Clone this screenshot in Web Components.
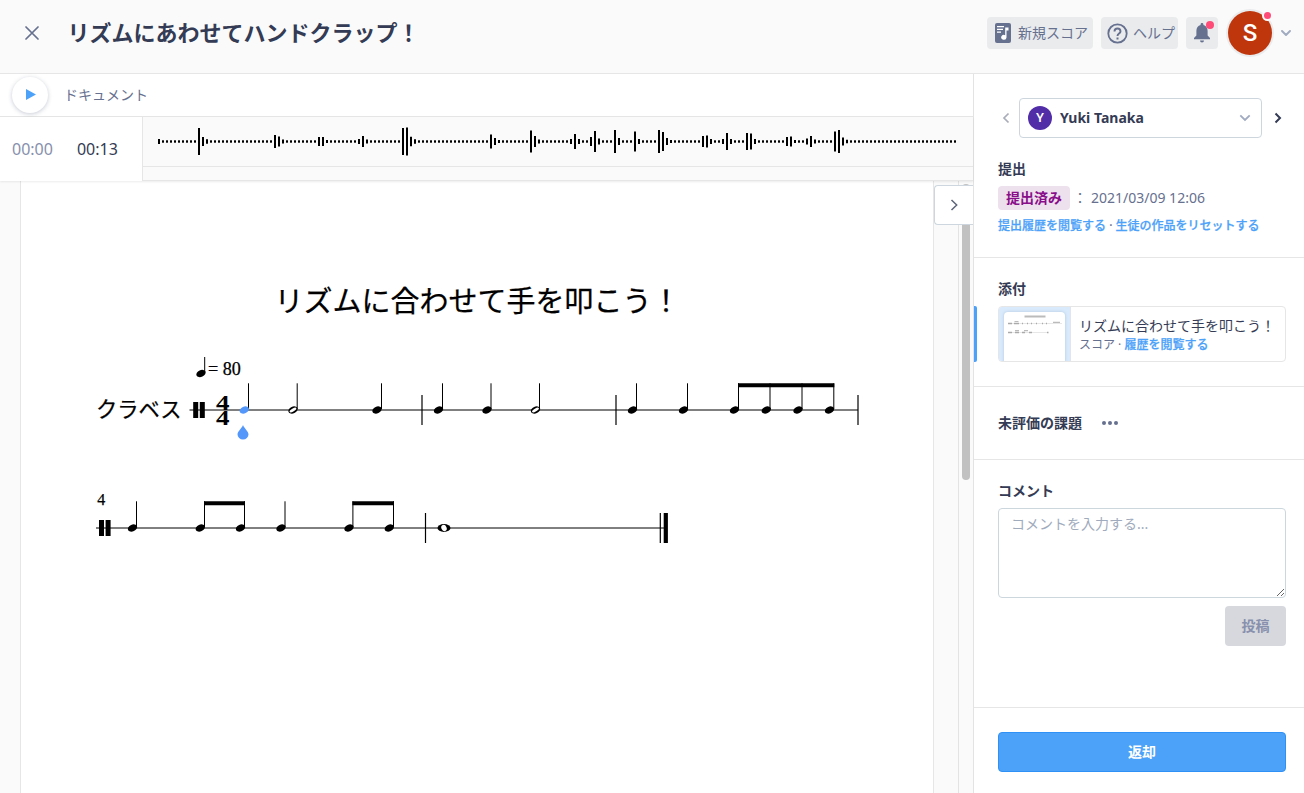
<!DOCTYPE html>
<html lang="ja">
<head>
<meta charset="utf-8">
<title>リズムにあわせてハンドクラップ！</title>
<style>
html,body{margin:0;height:100%;overflow:hidden}
body{font-family:"Noto Sans","Noto Sans CJK JP",sans-serif;font-size:14px;color:#343b54;background:#fafafa}
</style>
</head>
<body>
<assignment-app></assignment-app>
<script>
function define(name, html, setup) {
  const tpl = document.createElement('template');
  tpl.innerHTML = '<style>*{box-sizing:border-box}svg{display:block;flex:none}</style>' + html;
  customElements.define(name, class extends HTMLElement {
    constructor() {
      super();
      this.attachShadow({mode: 'open'}).appendChild(tpl.content.cloneNode(true));
      if (setup) setup(this.shadowRoot, this);
    }
  });
}

define('tool-button', `
<style>
:host{display:block;height:32px;flex:none}
button{display:flex;align-items:center;gap:5px;width:100%;height:32px;padding:0 0 0 7px;border:0;border-radius:4px;background:#e9ebed;color:#66708f;font:400 14px/30px "Noto Sans CJK JP",sans-serif;white-space:nowrap}
.label{display:block;height:32px}
</style>
<button><slot name="icon"></slot><span class="label"><slot></slot></span></button>`);

define('user-avatar', `
<style>
:host{display:flex;position:relative;width:44px;height:44px;border-radius:50%;background:#bf360c;box-shadow:0 0 0 2px #e9ebed;color:#fff;align-items:center;justify-content:center;font:500 24px/44px Roboto,sans-serif;flex:none}
i{position:absolute;right:1px;top:1px;width:7px;height:7px;border-radius:50%;background:#ff4b77;box-shadow:0 0 0 2px #fafafa}
</style><slot></slot><i></i>`);

define('app-header', `
<style>
:host{display:flex;align-items:flex-start;height:74px;padding:11px 13px 0 25px;border-bottom:1px solid #e6e6e6;background:#fafafa;flex:none}
.close{margin-top:15px}
h1{margin:2px auto 0 28.5px;font:700 22px/36px "Noto Sans CJK JP",sans-serif;color:#343b54}
tool-button{margin:6px 8px 0 0}
.new{width:106px}.help{width:77px}
.bell{position:relative;width:32px;margin-right:10px}
.down{margin:19px 0 0 9px}
</style>
<svg class="close" width="14" height="14" viewBox="0 0 14 14" fill="none" stroke="#66708f" stroke-width="1.7" stroke-linecap="round"><path d="M1 1l12 12M13 1L1 13"/></svg>
<h1>リズムにあわせてハンドクラップ！</h1>
<tool-button class="new"><svg slot="icon" width="19" height="20" viewBox="0 0 19 20"><rect x="1" width="16" height="20" rx="2" fill="#66708f"/><path d="M3 3.7h7M3 6.4h6M3 9.1h4" stroke="#fff" stroke-width="1.2"/><path d="M11.200 4.500h3.300v3h-2v7a2.700 2.400 0 1 1-1.300-2.200z" fill="#fff"/></svg>新規スコア</tool-button>
<tool-button class="help"><svg slot="icon" style="margin-left:-1px" width="21" height="21" viewBox="0 0 21 21" fill="none" stroke="#66708f" stroke-width="1.8"><circle cx="10.5" cy="10.5" r="9.2"/><path d="M7.500 8.500c0-4 6-4 6 0 0 2-3 2.200-3 4.400" stroke-width="1.9"/><path d="M10.500 14.500v2" stroke-width="2"/></svg>ヘルプ</tool-button>
<tool-button class="bell"><svg slot="icon" style="overflow:visible" width="18" height="22" viewBox="0 0 18 22"><path d="M9 1c.9 0 1.400.6 1.400 1.400v.7c2.600.6 4.200 2.800 4.200 5.600v4.900l2.400 2.500v1.100H1v-1.100l2.400-2.500V8.700c0-2.800 1.600-5 4.200-5.600v-.7C7.600 1.600 8.100 1 9 1zM7 18.500h4a2 2 0 0 1-4 0z" fill="#66708f"/><circle cx="17" cy="3" r="4" fill="#ff4b77"/></svg></tool-button>
<user-avatar>S</user-avatar>
<svg class="down" width="10" height="7" viewBox="0 0 10 7" fill="none" stroke="#a0abc0" stroke-width="1.900" stroke-linecap="round" stroke-linejoin="round"><path d="M1 1l4 4 4-4"/></svg>`);

define('player-bar', `
<style>
:host{display:flex;align-items:center;height:43px;flex:none;background:#fff;border-bottom:1px solid #e6e6e6;padding-left:12px;color:#66708f;font:400 14px/42px "Noto Sans CJK JP",sans-serif}
.play{display:flex;align-items:center;justify-content:center;width:36px;height:36px;border-radius:50%;background:#fff;box-shadow:0 1px 4px rgba(40,50,90,.25);margin-right:16px}
.label{height:45px}
</style>
<div class="play"><svg width="12" height="12" viewBox="0 0 12 12"><path d="M2 0L12 5.500l-10 5.600z" fill="#4ca1f9"/></svg></div><span class="label"><slot></slot></span>`);

define('wave-timeline', `
<style>
:host{display:flex;height:64px;flex:none;background:#fafafa;position:relative;z-index:1;box-shadow:0 1px 2px rgba(0,0,0,.08)}
.time{display:flex;width:143px;border-right:1px solid #e6e6e6;background:#fff;padding-left:12px;gap:24px;font:400 16px/64px "Noto Sans",sans-serif;color:#343b54}
.time span:first-child{color:#8790ad}
.track{flex:1;border-bottom:1px solid #e6e6e6}
.wave{height:50px;border-bottom:1px solid #e6e6e6}
</style>
<div class="time"><span>00:00</span><span>00:13</span></div>
<div class="track"><div class="wave"><svg width="830" height="49"></svg></div></div>`, root => {
  const peaks = {0:5,10:27,11:9,12:4.5,29:13,30:10,31:4,40:9,41:9,42:3,50:5,51:11,52:4,61:27,62:28,63:9.5,64:4.5,83:14,84:7,85:3,93:22,94:11,95:4,
    103:5,104:15,105:5,108:9,109:21,110:6,114:23,115:7,119:20,120:5,125:23,126:19,127:7,128:3,136:11,137:12,138:5,141:5,142:17,143:5,
    147:17,148:16,149:5,157:9,158:10,159:3,162:6,163:11,164:4,169:20,170:23,171:8,172:3.5};
  let bars = '';
  for (let i = 0; i < 200; i++) {
    const h = peaks[i] || 2.4;
    bars += `<rect x="${15 + i * 4}" y="${24.5 - h / 2}" width="2" height="${h}"/>`;
  }
  root.querySelector('svg').innerHTML = bars;
});

define('score-sheet', `
<style>
:host{display:block;width:914px;margin-left:20px;height:612px;background:#fff;border:solid #e6e6e6;border-width:0 1px;overflow:hidden}
text{font-family:"Liberation Serif",serif;fill:#000}
.jp{font-family:"Noto Sans CJK JP",sans-serif}
.light{stroke:#000;stroke-width:.25px}
</style>
<svg width="912" height="612" viewBox="21 181 912 612"></svg>`, root => {
  const head = (x, y, fill) => `<ellipse cx="${x}" cy="${y}" rx="4.9" ry="3.4" transform="rotate(-24 ${x} ${y})" fill="${fill || '#000'}"/>`;
  const stem = (x, top, y) => `<path d="M${x} ${top}V${y - 1}" stroke="#000" stroke-width="1"/>`;
  const half = (x, y) => head(x, y) + `<ellipse cx="${x}" cy="${y}" rx="3.9" ry="1.4" transform="rotate(-32 ${x} ${y})" fill="#fff"/>`;
  const line = (x1, x2, y) => `<path d="M${x1} ${y}H${x2}" stroke="#000" stroke-width="1"/>`;
  const bar = (x, y) => `<path d="M${x} ${y - 15}v30" stroke="#000" stroke-width="1.2"/>`;
  const clef = (x, y) => `<path d="M${x} ${y - 8}h5v16h-5zM${x + 6.6} ${y - 8}h5v16h-5z"/>`;
  const beam = (x1, x2, y) => `<path d="M${x1 - .5} ${y}H${x2 + .5}v4H${x1 - .5}z"/>`;
  let s = `<text class="jp light" x="274.5" y="312" font-size="29">リズムに合わせて手を叩こう！</text>
    <text class="jp light" x="96" y="416.5" font-size="21.3">クラベス</text>
    <text class="light" x="208" y="375.3" font-size="18.1">= 80</text>
    <text class="light" x="97.300" y="505" font-size="16">4</text>`;
  s += head(201, 373.5) + stem(204.7, 357, 373);
  s += line(189.5, 858, 410) + clef(193.2, 410);
  s += `<text x="216" y="409.7" font-size="22" font-weight="700" textLength="13.5" lengthAdjust="spacingAndGlyphs">4</text>
    <text x="216" y="424.8" font-size="22" font-weight="700" textLength="13.5" lengthAdjust="spacingAndGlyphs">4</text>`;
  for (const [x, st] of [[377,381.5],[438.5,442.5],[487,491],[632.5,636.5],[683.5,687.5],[734.5,738.5],[766.3,770],[798,802],[829.5,833.8]])
    s += head(x, 410) + stem(st, 383.3, 410);
  s += half(293, 410) + stem(297.2, 383.3, 410) + half(535.5, 410) + stem(539.5, 383.3, 410);
  s += stem(248.5, 383.3, 410) + head(244.3, 410, '#5497fb') + beam(738.5, 833.8, 383.3);
  s += bar(422, 410) + bar(616, 410) + bar(858, 410);
  s += `<path d="M243 425c1 3 5.500 6.500 5.500 9.300a5.500 5.200 0 0 1-11 0c0-2.800 4.500-6.300 5.500-9.300z" fill="#5497fb"/>`;
  s += line(96, 664, 528) + clef(99, 528);
  for (const [x, st] of [[132.5,136.5],[200.3,204.5],[240.5,244.5],[281,285],[349,352.9],[389.3,393.5]])
    s += head(x, 528) + stem(st, 501.3, 528);
  s += beam(204.5, 244.5, 501.3) + beam(352.9, 393.5, 501.3) + bar(425.5, 528);
  s += `<ellipse cx="444" cy="528" rx="6.500" ry="3.900"/><ellipse cx="444" cy="528" rx="2.600" ry="3.200" transform="rotate(-25 444 528)" fill="#fff"/>`;
  s += bar(660.3, 528) + `<path d="M663.7 513h4.2v30h-4.2z"/>`;
  root.querySelector('svg').innerHTML = s;
});

define('score-viewport', `
<style>
:host{display:flex;position:relative;flex:1;min-height:0;background:#fafafa;overflow:hidden}
.scroll{width:15px;margin-left:24px;border-left:1px solid #e3e3e3;background:#fafafa;padding:2px 3px}
.thumb{width:8px;height:296px;margin-top:1px;border-radius:4px;background:#c1c1c1}
button{position:absolute;right:0;top:4px;width:39px;height:40px;border:1px solid #cdd6de;border-right:0;border-radius:4px 0 0 4px;background:#fff;padding:0 0 0 15px;display:flex;align-items:center}
</style>
<score-sheet></score-sheet>
<div class="scroll"><div class="thumb"></div></div>
<button aria-label="toggle"><svg width="9" height="12" viewBox="0 0 9 12" fill="none" stroke="#5d6579" stroke-width="1.5"><path d="M1.500 1l5.200 5-5.200 5"/></svg></button>`);

define('side-section', `
<style>
:host{display:block;padding:0 18px 0 24px;border-bottom:1px solid #e6e6e6;flex:none}
h2{margin:0;font:700 14px/20px "Noto Sans CJK JP",sans-serif;color:#343b54}
</style><slot name="top"></slot><h2><slot name="heading"></slot></h2><slot></slot>`);

define('student-picker', `
<style>
:host{display:flex;align-items:center;height:40px;padding-left:4px;margin-bottom:20px}
.box{display:flex;align-items:center;flex:none;width:243px;height:40px;margin:0 12px 0 8px;border:1px solid #cdd6dd;border-radius:4px;padding:0 10px 0 8px;font:700 14px/38px "Noto Sans",sans-serif;color:#343b54}
.dot{width:24px;height:24px;border-radius:50%;background:#512da8;color:#fff;font:500 13px/24px Roboto,sans-serif;text-align:center;margin-right:8px}
.name{flex:1}
</style>
<svg width="9" height="12" viewBox="0 0 9 12" fill="none" stroke="#a9adb9" stroke-width="1.7"><path d="M6.500 1.500L2 6l4.500 4.500"/></svg>
<div class="box"><span class="dot">Y</span><span class="name"><slot></slot></span><svg width="12" height="8" viewBox="0 0 12 8" fill="none" stroke="#a0abc0" stroke-width="1.8"><path d="M1.300 1.300L6 6l4.700-4.700"/></svg></div>
<svg width="9" height="12" viewBox="0 0 9 12" fill="none" stroke="#343b54" stroke-width="2"><path d="M1.500 1.500L6 6l-4.500 4.500"/></svg>`);

define('submission-status', `
<style>
:host{display:block}
.row{display:flex;margin-top:8px;height:24px;line-height:24px;color:#66708f}
b{width:72px;height:24px;text-align:center;border-radius:4px;background:#eee1ee;color:#880e8a;font:700 14px/23px "Noto Sans CJK JP",sans-serif}
.colon{width:14px;margin:0 4px 0 3px;text-align:center;font:400 14px/22px "Noto Sans CJK JP",sans-serif}
.date{font:400 14px/24px "Noto Sans",sans-serif}
.links{margin-top:6px;font:500 12px/20px "Noto Sans","Noto Sans CJK JP",sans-serif;color:#66708f;white-space:nowrap}
a{color:#4ca1f9;-webkit-text-stroke:.25px #4ca1f9}
</style>
<div class="row"><b>提出済み</b><span class="colon">：</span><span class="date">2021/03/09 12:06</span></div>
<div class="links"><a>提出履歴を閲覧する</a> · <a>生徒の作品をリセットする</a></div>`);

define('attachment-card', `
<style>
:host{display:flex;position:relative;height:56px;margin-top:8px;border:1px solid #e6e6e6;border-radius:4px}
:host::before{content:"";position:absolute;left:-25px;top:-1px;width:3px;height:56px;background:#4ca1f9;border-radius:0 2px 2px 0}
.thumb{width:72px;background:#d9eafc;border-right:1px solid #e1e6ec;border-radius:3px 0 0 3px;padding:5px 0 0 5px;overflow:hidden}
.paper{width:61px;height:50px;background:#fff;border-radius:4px 4px 0 0;box-shadow:0 0 3px rgba(60,90,130,.25)}
.text{padding:7px 0 0 8px;white-space:nowrap}
.name{font:400 14px/22px "Noto Sans CJK JP",sans-serif;color:#343b54}
.meta{font:400 12px/16px "Noto Sans","Noto Sans CJK JP",sans-serif;color:#66708f;margin-top:1px}
a{font-weight:500;color:#4ca1f9;-webkit-text-stroke:.25px #4ca1f9}
</style>
<div class="thumb"><div class="paper"><svg width="61" height="40" viewBox="0 0 61 40" fill="none" stroke="#bbb"><path d="M20.500 4.500h21" stroke-width="1.800"/><path d="M4 11.500h54M4 20.500h40" stroke="#ddd" stroke-width=".7"/><path d="M4 11.500h4M10 11.500h5M18 11.500h1M23 11.500h1M27 11.500h1M32 11.500h1M38 11.500h1M42 11.500h1M4 20.500h4M11 20.500h4M18 20.500h3M25 20.500h3M43 20.500h1.500" stroke="#aaa" stroke-width="1.300"/><path d="M10.500 9.500h4M49 10.300h7M11 18.700h4M20 18.700h4" stroke-width="1.200"/></svg></div></div>
<div class="text"><div class="name">リズムに合わせて手を叩こう！</div><div class="meta">スコア · <a>履歴を閲覧する</a></div></div>`);

define('comment-form', `
<style>
:host{display:flex;flex-direction:column;align-items:flex-end;margin-top:8px}
textarea{display:block;width:100%;height:90px;border:1px solid #cbd7dc;border-radius:4px;padding:4px 12px;font:400 14px/21px "Noto Sans","Noto Sans CJK JP",sans-serif;background:#fff;resize:vertical}
textarea::placeholder{color:#a0abbd}
button{margin-top:8px;width:61px;height:40px;border:0;border-radius:4px;background:#d6d8dd;color:#8790ad;font:700 14px/38px "Noto Sans CJK JP",sans-serif;padding:0 0 2px}
</style>
<textarea placeholder="コメントを入力する..."></textarea><button>投稿</button>`);

define('review-panel', `
<style>
:host{display:flex;flex-direction:column;width:331px;flex:none;border-left:1px solid #e3e3e3;background:#fff}
.a{height:184px;padding-top:24px}
.b{height:129px;padding-top:20px}
.c{height:73px;padding-top:25px}
.d{height:248px;padding-top:20px}
.dots{display:inline-block;vertical-align:middle;margin:-3px 0 0 20px}
.foot{padding:24px 18px 0 24px}
.foot button{display:block;width:100%;height:40px;border:1px solid #2f91f5;border-radius:4px;background:#4ca1f9;color:#fff;font:700 14px/36px "Noto Sans CJK JP",sans-serif;padding:0 0 2px}
</style>
<side-section class="a"><student-picker slot="top">Yuki Tanaka</student-picker><span slot="heading">提出</span><submission-status></submission-status></side-section>
<side-section class="b"><span slot="heading">添付</span><attachment-card></attachment-card></side-section>
<side-section class="c"><span slot="heading">未評価の課題<svg class="dots" width="16" height="4" viewBox="0 0 16 4" fill="#66708f"><circle cx="2" cy="2" r="2"/><circle cx="8" cy="2" r="2"/><circle cx="14" cy="2" r="2"/></svg></span></side-section>
<side-section class="d"><span slot="heading">コメント</span><comment-form></comment-form></side-section>
<div class="foot"><button>返却</button></div>`);

define('assignment-app', `
<style>
:host{display:flex;flex-direction:column;height:793px;width:1304px}
.body{display:flex;flex:1;min-height:0}
main{display:flex;flex-direction:column;width:973px;flex:none}
</style>
<app-header></app-header>
<div class="body"><main><player-bar>ドキュメント</player-bar><wave-timeline></wave-timeline><score-viewport></score-viewport></main><review-panel></review-panel></div>`);
</script>
</body>
</html>
